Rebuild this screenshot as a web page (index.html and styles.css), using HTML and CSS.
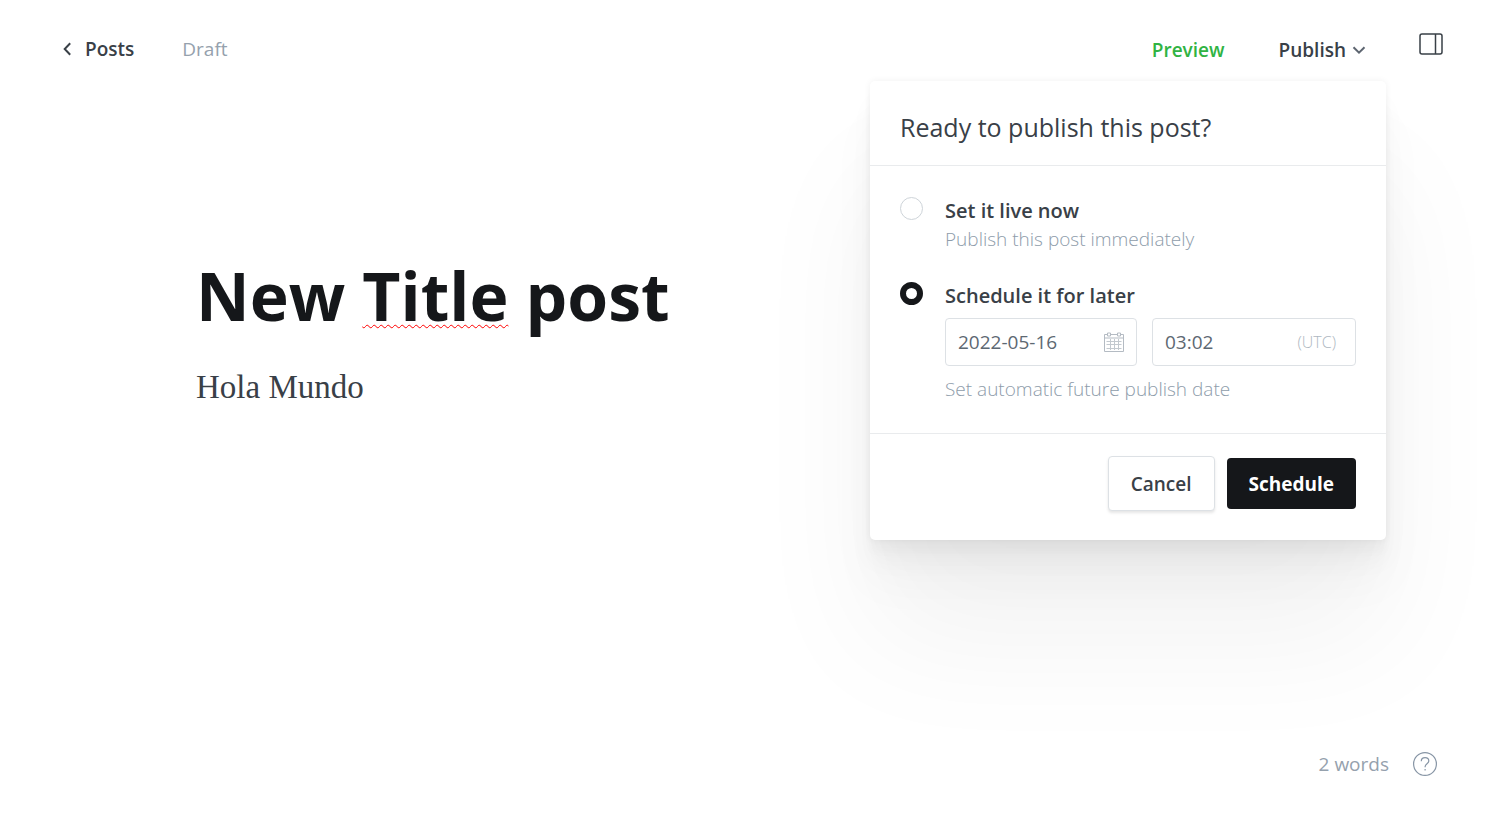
FILE: index.html
```html
<!DOCTYPE html>
<html lang="en">
<head>
<meta charset="utf-8">
<meta name="viewport" content="width=device-width, initial-scale=1">
<title>New Title post</title>
<link rel="stylesheet" href="styles.css">
</head>
<body>
<div class="editor">
  <header class="topbar">
    <nav class="crumbs">
      <a class="back" href="#posts">
        <svg class="back-icon" viewBox="0 0 8 14" aria-hidden="true"><path d="M7.200 1.300 1.700 7l5.500 5.700"/></svg>
        Posts
      </a>
      <span class="status">Draft</span>
    </nav>
    <div class="actions">
      <button class="preview" type="button">Preview</button>
      <div class="publish">
        <button class="publish-toggle" type="button" aria-expanded="true">Publish
          <svg class="chevron" viewBox="0 0 14 8" aria-hidden="true"><path d="M1.500 1.200 7 6.600l5.500-5.400"/></svg>
        </button>
        <form class="menu">
          <h2 class="menu-title">Ready to publish this post?</h2>
          <div class="menu-body">
            <div class="option">
              <input class="radio" type="radio" name="when" id="now">
              <div class="option-text">
                <label class="option-label" for="now">Set it live now</label>
                <p class="hint">Publish this post immediately</p>
              </div>
            </div>
            <div class="option">
              <input class="radio" type="radio" name="when" id="later" checked>
              <div class="option-text">
                <label class="option-label" for="later">Schedule it for later</label>
                <div class="fields">
                  <div class="field">
                    <input class="field-input" type="text" value="2022-05-16" aria-label="Publish date">
                    <svg class="calendar" viewBox="0 0 20 20" aria-hidden="true"><path d="M3.500 2.500h-3v17h19v-17h-3M6.500 2.500h7M.5 6h19M3.500 1h3v3h-3zM13.500 1h3v3h-3z"/><path class="calendar-grid" d="M2.500 9.500h15M2.500 12.500h15M2.500 16.500h15M6.500 7v11M10.500 7v11M14.500 7v11"/></svg>
                  </div>
                  <div class="field field-time">
                    <input class="field-input" type="text" value="03:02" aria-label="Publish time">
                    <span class="zone">(UTC)</span>
                  </div>
                </div>
                <p class="hint">Set automatic future publish date</p>
              </div>
            </div>
          </div>
          <div class="menu-footer">
            <button class="btn btn-cancel" type="button">Cancel</button>
            <button class="btn btn-primary" type="button">Schedule</button>
          </div>
        </form>
      </div>
      <button class="sidebar-toggle" type="button" aria-label="Settings">
        <svg class="sidebar-icon" viewBox="0 0 24 22" aria-hidden="true"><rect x="1" y="1" width="22" height="20" rx="2"/><path d="M16.500 1v20"/></svg>
      </button>
    </div>
  </header>
  <main class="canvas">
    <h1 class="title" contenteditable="true" spellcheck="false">New <span class="misspelt">Title</span> post</h1>
    <div class="body" contenteditable="true" spellcheck="false">Hola Mundo</div>
  </main>
  <footer class="statusbar">
    <span>2 words</span>
    <a class="help" href="#help" aria-label="Help">
      <svg class="help-icon" viewBox="0 0 24 24" aria-hidden="true"><circle cx="12" cy="12" r="11.400"/><path d="M8.300 9.200c0-2.300 1.700-3.500 3.800-3.500s3.700 1.300 3.700 3.300c0 2.700-3.700 2.900-3.700 5.800v.4M12.100 17v1.400"/></svg>
    </a>
  </footer>
</div>
</body>
</html>
```
FILE: styles.css
```css
* {
  box-sizing: border-box;
}

body {
  margin: 0;
  background: #fff;
  color: #394047;
  font-family: "Segoe UI", "Open Sans", "Noto Sans", sans-serif;
  font-size: 19px;
}

button,
input {
  font: inherit;
  color: inherit;
}

button {
  padding: 0;
  border: 0;
  background: none;
  cursor: pointer;
}

svg {
  display: block;
  fill: none;
  stroke: currentColor;
}

.editor {
  display: flex;
  flex-direction: column;
  min-height: 100vh;
}

.topbar {
  display: flex;
  justify-content: space-between;
  align-items: flex-start;
  padding: 32px 57px 0 63px;
}

.crumbs {
  display: flex;
  gap: 48px;
  line-height: 34px;
}

.back {
  display: flex;
  align-items: center;
  gap: 14px;
  color: #394047;
  font-weight: 600;
  text-decoration: none;
}

.back-icon {
  width: 8px;
  height: 14px;
  stroke-width: 2;
}

.status {
  color: #95a1ad;
}

.actions {
  display: flex;
  align-items: flex-start;
  font-weight: 600;
}

.preview {
  height: 36px;
  margin-right: 54px;
  color: #30b343;
}

.publish {
  position: relative;
  margin-right: 53px;
}

.publish-toggle {
  display: flex;
  align-items: center;
  gap: 6px;
  height: 36px;
}

.chevron {
  width: 14px;
  height: 8px;
  stroke: #5d6570;
  stroke-width: 2;
}

.sidebar-icon {
  width: 24px;
  height: 22px;
  margin-top: 1px;
  stroke-width: 1.500;
}

.menu {
  position: absolute;
  top: 49px;
  right: -20px;
  width: 516px;
  border-radius: 5px;
  background: #fff;
  box-shadow:
    0 0 7px rgba(0, 0, 0, 0.06),
    0 12px 10px rgba(0, 0, 0, 0.02),
    0 22px 24px rgba(0, 0, 0, 0.03),
    0 42px 50px rgba(0, 0, 0, 0.03),
    0 100px 130px rgba(0, 0, 0, 0.05);
  font-weight: 400;
}

.menu-title {
  margin: 0;
  padding: 28px 30px 20px;
  border-bottom: 1px solid #e9ebed;
  font-size: 25px;
  font-weight: 400;
  line-height: 36px;
}

.menu-body {
  display: flex;
  flex-direction: column;
  gap: 28px;
  padding: 31px 30px 29px;
}

.option {
  display: flex;
  gap: 22px;
}

.radio {
  appearance: none;
  flex: none;
  width: 23px;
  height: 23px;
  margin: 0;
  border: 1px solid #ced4d9;
  border-radius: 50%;
  background: #fff;
}

.radio:checked {
  border: 6px solid #15171a;
}

.option-text {
  flex: 1;
  min-width: 0;
}

.option-label {
  display: block;
  font-size: 20px;
  font-weight: 600;
  line-height: 28px;
}

.hint {
  margin: 0;
  color: #8e9caa;
  font-weight: 300;
  line-height: 29px;
}

.fields {
  display: grid;
  grid-template-columns: 16fr 17fr;
  gap: 15px;
  margin: 8px 0 9px;
}

.field {
  display: flex;
  align-items: center;
  height: 48px;
  padding: 0 12px;
  border: 1px solid #dde1e5;
  border-radius: 4px;
  color: #5d6872;
}

.field-time {
  padding-right: 19px;
}

.field-input {
  flex: 1;
  width: 0;
  padding: 0;
  border: 0;
  outline: 0;
  background: none;
}

.calendar {
  width: 20px;
  height: 20px;
  stroke: #b4bbc3;
}

.calendar-grid {
  stroke: #c3c9cf;
}

.zone {
  color: #aeb7c1;
  font-size: 16px;
  font-weight: 300;
}

.menu-footer {
  display: flex;
  justify-content: flex-end;
  align-items: center;
  gap: 12px;
  padding: 22px 30px 29px;
  border-top: 1px solid #e9ebed;
}

.btn {
  height: 51px;
  padding: 0 22px;
  border-radius: 4px;
  font-weight: 600;
}

.btn-cancel {
  height: 55px;
  border: 1px solid #dde1e5;
  background: #fff;
  box-shadow: 0 2px 3px rgba(0, 0, 0, 0.1);
}

.btn-primary {
  background: #15171a;
  color: #fff;
  font-weight: 700;
}

.canvas {
  flex: 1;
  width: 100%;
  max-width: 1172px;
  margin: 0 auto;
  padding: 175px 32px 0;
}

.title {
  margin: 0;
  color: #15171a;
  font-size: 66px;
  font-weight: 700;
  line-height: 104px;
}

.misspelt {
  text-decoration: underline wavy #f00 1px;
  text-decoration-skip-ink: none;
  text-underline-offset: 3px;
}

.body {
  margin-top: 16px;
  font-family: "Liberation Serif", serif;
  font-size: 33px;
  line-height: 48px;
}

.statusbar {
  display: flex;
  justify-content: flex-end;
  align-items: center;
  gap: 24px;
  padding: 0 63px 54px 0;
  color: #95a1ad;
  line-height: 32px;
}

.help {
  color: #8795a5;
}

.help-icon {
  width: 24px;
  height: 24px;
  stroke-width: 1.200;
}
```
